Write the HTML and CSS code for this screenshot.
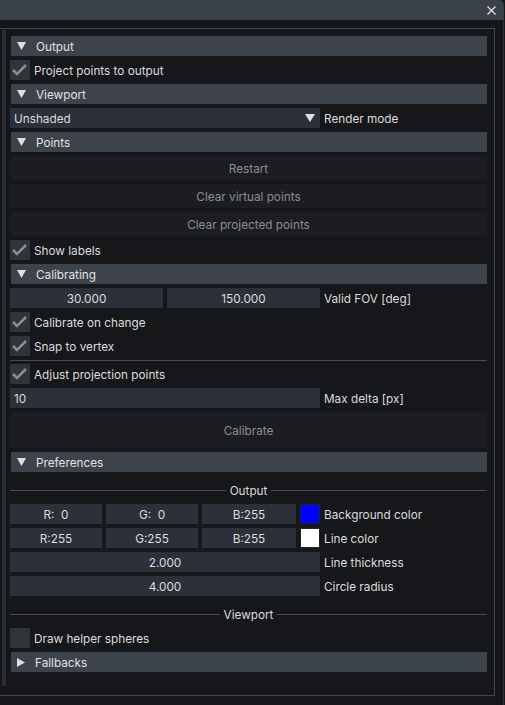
FILE: index.html
```html
<!DOCTYPE html>
<html>
<head>
<meta charset="utf-8">
<link rel="stylesheet" href="styles.css">
</head>
<body>
<div class="window">
  <div class="titlebar">
    <svg class="close" width="9" height="9" viewBox="0 0 9 9"><path d="M0.5 0.5 L8.5 8.5 M8.5 0.5 L0.5 8.5" stroke="#e6e6e6" stroke-width="1.2" fill="none"/></svg>
  </div>
  <div class="main">
    <div class="frame">
      <div class="strip"></div>
      <div class="content">
        <div class="header"><svg class="arrow" width="9" height="8" viewBox="0 0 9 8"><polygon points="0,0 9,0 4.5,8" fill="#e0e0e0"/></svg><span>Output</span></div>
        <div class="row"><span class="box"><svg width="20" height="20" viewBox="0 0 20 20"><polyline points="3,10 7,14 16,5" fill="none" stroke="#8c8c8c" stroke-width="2.6"/></svg></span><span class="lbl">Project points to output</span></div>

        <div class="header"><svg class="arrow" width="9" height="8" viewBox="0 0 9 8"><polygon points="0,0 9,0 4.5,8" fill="#e0e0e0"/></svg><span>Viewport</span></div>
        <div class="row">
          <div class="field combo w-full"><span>Unshaded</span><svg width="10" height="8" viewBox="0 0 10 8"><polygon points="0,0 10,0 5,8" fill="#e0e0e0"/></svg></div>
          <span class="lbl">Render mode</span>
        </div>

        <div class="header"><svg class="arrow" width="9" height="8" viewBox="0 0 9 8"><polygon points="0,0 9,0 4.5,8" fill="#e0e0e0"/></svg><span>Points</span></div>
        <div class="button">Restart</div>
        <div class="button">Clear virtual points</div>
        <div class="button">Clear projected points</div>
        <div class="row"><span class="box"><svg width="20" height="20" viewBox="0 0 20 20"><polyline points="3,10 7,14 16,5" fill="none" stroke="#8c8c8c" stroke-width="2.6"/></svg></span><span class="lbl">Show labels</span></div>

        <div class="header"><svg class="arrow" width="9" height="8" viewBox="0 0 9 8"><polygon points="0,0 9,0 4.5,8" fill="#e0e0e0"/></svg><span>Calibrating</span></div>
        <div class="row">
          <div class="field center w-half">30.000</div>
          <div class="field center w-half">150.000</div>
          <span class="lbl">Valid FOV [deg]</span>
        </div>
        <div class="row"><span class="box"><svg width="20" height="20" viewBox="0 0 20 20"><polyline points="3,10 7,14 16,5" fill="none" stroke="#8c8c8c" stroke-width="2.6"/></svg></span><span class="lbl">Calibrate on change</span></div>
        <div class="row"><span class="box"><svg width="20" height="20" viewBox="0 0 20 20"><polyline points="3,10 7,14 16,5" fill="none" stroke="#8c8c8c" stroke-width="2.6"/></svg></span><span class="lbl">Snap to vertex</span></div>
        <div class="sep"></div>
        <div class="row"><span class="box"><svg width="20" height="20" viewBox="0 0 20 20"><polyline points="3,10 7,14 16,5" fill="none" stroke="#8c8c8c" stroke-width="2.6"/></svg></span><span class="lbl">Adjust projection points</span></div>
        <div class="row">
          <div class="field left w-full">10</div>
          <span class="lbl">Max delta [px]</span>
        </div>
        <div class="button tall">Calibrate</div>

        <div class="header"><svg class="arrow" width="9" height="8" viewBox="0 0 9 8"><polygon points="0,0 9,0 4.5,8" fill="#e0e0e0"/></svg><span>Preferences</span></div>
        <div class="septext"><span class="line"></span><span class="sep-label">Output</span><span class="line"></span></div>
        <div class="row">
          <div class="field center w-c1">R:&nbsp; 0</div>
          <div class="field center w-c1">G:&nbsp; 0</div>
          <div class="field center w-c3">B:255</div>
          <span class="swatch blue"></span>
          <span class="lbl">Background color</span>
        </div>
        <div class="row">
          <div class="field center w-c1">R:255</div>
          <div class="field center w-c1">G:255</div>
          <div class="field center w-c3">B:255</div>
          <span class="swatch white"></span>
          <span class="lbl">Line color</span>
        </div>
        <div class="row">
          <div class="field center w-full">2.000</div>
          <span class="lbl">Line thickness</span>
        </div>
        <div class="row">
          <div class="field center w-full">4.000</div>
          <span class="lbl">Circle radius</span>
        </div>
        <div class="septext"><span class="line"></span><span class="sep-label">Viewport</span><span class="line"></span></div>
        <div class="row"><span class="box"></span><span class="lbl">Draw helper spheres</span></div>
        <div class="header"><svg class="arrow" width="8" height="9" viewBox="0 0 8 9"><polygon points="0,0 8,4.5 0,9" fill="#e0e0e0"/></svg><span>Fallbacks</span></div>
      </div>
    </div>
  </div>
</div>
</body>
</html>
```

FILE: styles.css
```css
html, body {
  margin: 0;
  padding: 0;
  background: #16171b;
}

body {
  font-family: Inter, "Noto Sans", sans-serif;
  font-size: 11.75px;
  color: #dcdcdc;
}

.window {
  width: 504px;
  height: 705px;
}

.titlebar {
  height: 20px;
  background: #3a4149;
  border-top-right-radius: 5px;
  display: flex;
  justify-content: flex-end;
  align-items: center;
  padding-right: 8px;
}

.close {
  display: block;
}

.main {
  height: 685px;
  box-sizing: border-box;
  border-right: 1px solid #2e3136;
  padding-top: 8px;
}

.frame {
  width: 495px;
  height: 668px;
  box-sizing: border-box;
  border: 1px solid #43464b;
  border-left: none;
  display: flex;
  align-items: flex-start;
}

.strip {
  width: 4px;
  height: 656px;
  margin-left: 2px;
  margin-top: 1px;
  background: #2a2d32;
}

.content {
  margin-left: 4px;
  width: 477px;
  padding-top: 7px;
  display: flex;
  flex-direction: column;
}

.header {
  height: 20px;
  margin-left: 1px;
  margin-bottom: 4px;
  background: #3c434b;
  display: flex;
  align-items: center;
  padding-left: 6px;
  color: #e2e2e2;
}

.header .arrow {
  display: block;
  margin-right: 10px;
}

.header span {
  line-height: 20px;
  padding-top: 2px;
}

.row {
  height: 20px;
  margin-bottom: 4px;
  display: flex;
  align-items: center;
  gap: 4px;
}

.box {
  width: 20px;
  height: 20px;
  background: #2f333a;
  display: block;
  flex: none;
}

.box svg {
  display: block;
}

.lbl {
  line-height: 20px;
  padding-top: 2px;
  white-space: nowrap;
}

.field {
  height: 20px;
  line-height: 20px;
  padding-top: 1px;
  background: #2c3038;
  box-sizing: border-box;
  flex: none;
  white-space: nowrap;
}

.field.center {
  text-align: center;
}

.field.left {
  padding-left: 4px;
}

.w-full { width: 310px; }
.w-half { width: 153px; }
.w-c1 { width: 92px; }
.w-c3 { width: 94px; }

.combo {
  display: flex;
  align-items: center;
  justify-content: space-between;
  padding-top: 0;
  padding-left: 4px;
  padding-right: 5px;
}

.combo span {
  padding-top: 2px;
}

.combo svg {
  display: block;
}

.button {
  height: 24px;
  line-height: 24px;
  padding-top: 1px;
  box-sizing: border-box;
  margin-bottom: 4px;
  background: #1c1d22;
  color: #8b8e94;
  text-align: center;
}

.button.tall {
  height: 36px;
  line-height: 36px;
}

.sep {
  height: 1px;
  background: #4a4c51;
  margin-bottom: 3px;
}

.septext {
  height: 24px;
  padding-top: 4px;
  box-sizing: border-box;
  margin-bottom: 4px;
  display: flex;
  align-items: center;
}

.septext .line {
  flex: 1;
  height: 1px;
  background: #4a4c51;
}

.sep-label {
  margin: 0 4px;
  line-height: 20px;
  padding-top: 2px;
}

.swatch {
  width: 20px;
  height: 20px;
  box-sizing: border-box;
  border: 1px solid #202230;
  flex: none;
}

.swatch.blue { background: #0000ff; }
.swatch.white { background: #ffffff; }
```
